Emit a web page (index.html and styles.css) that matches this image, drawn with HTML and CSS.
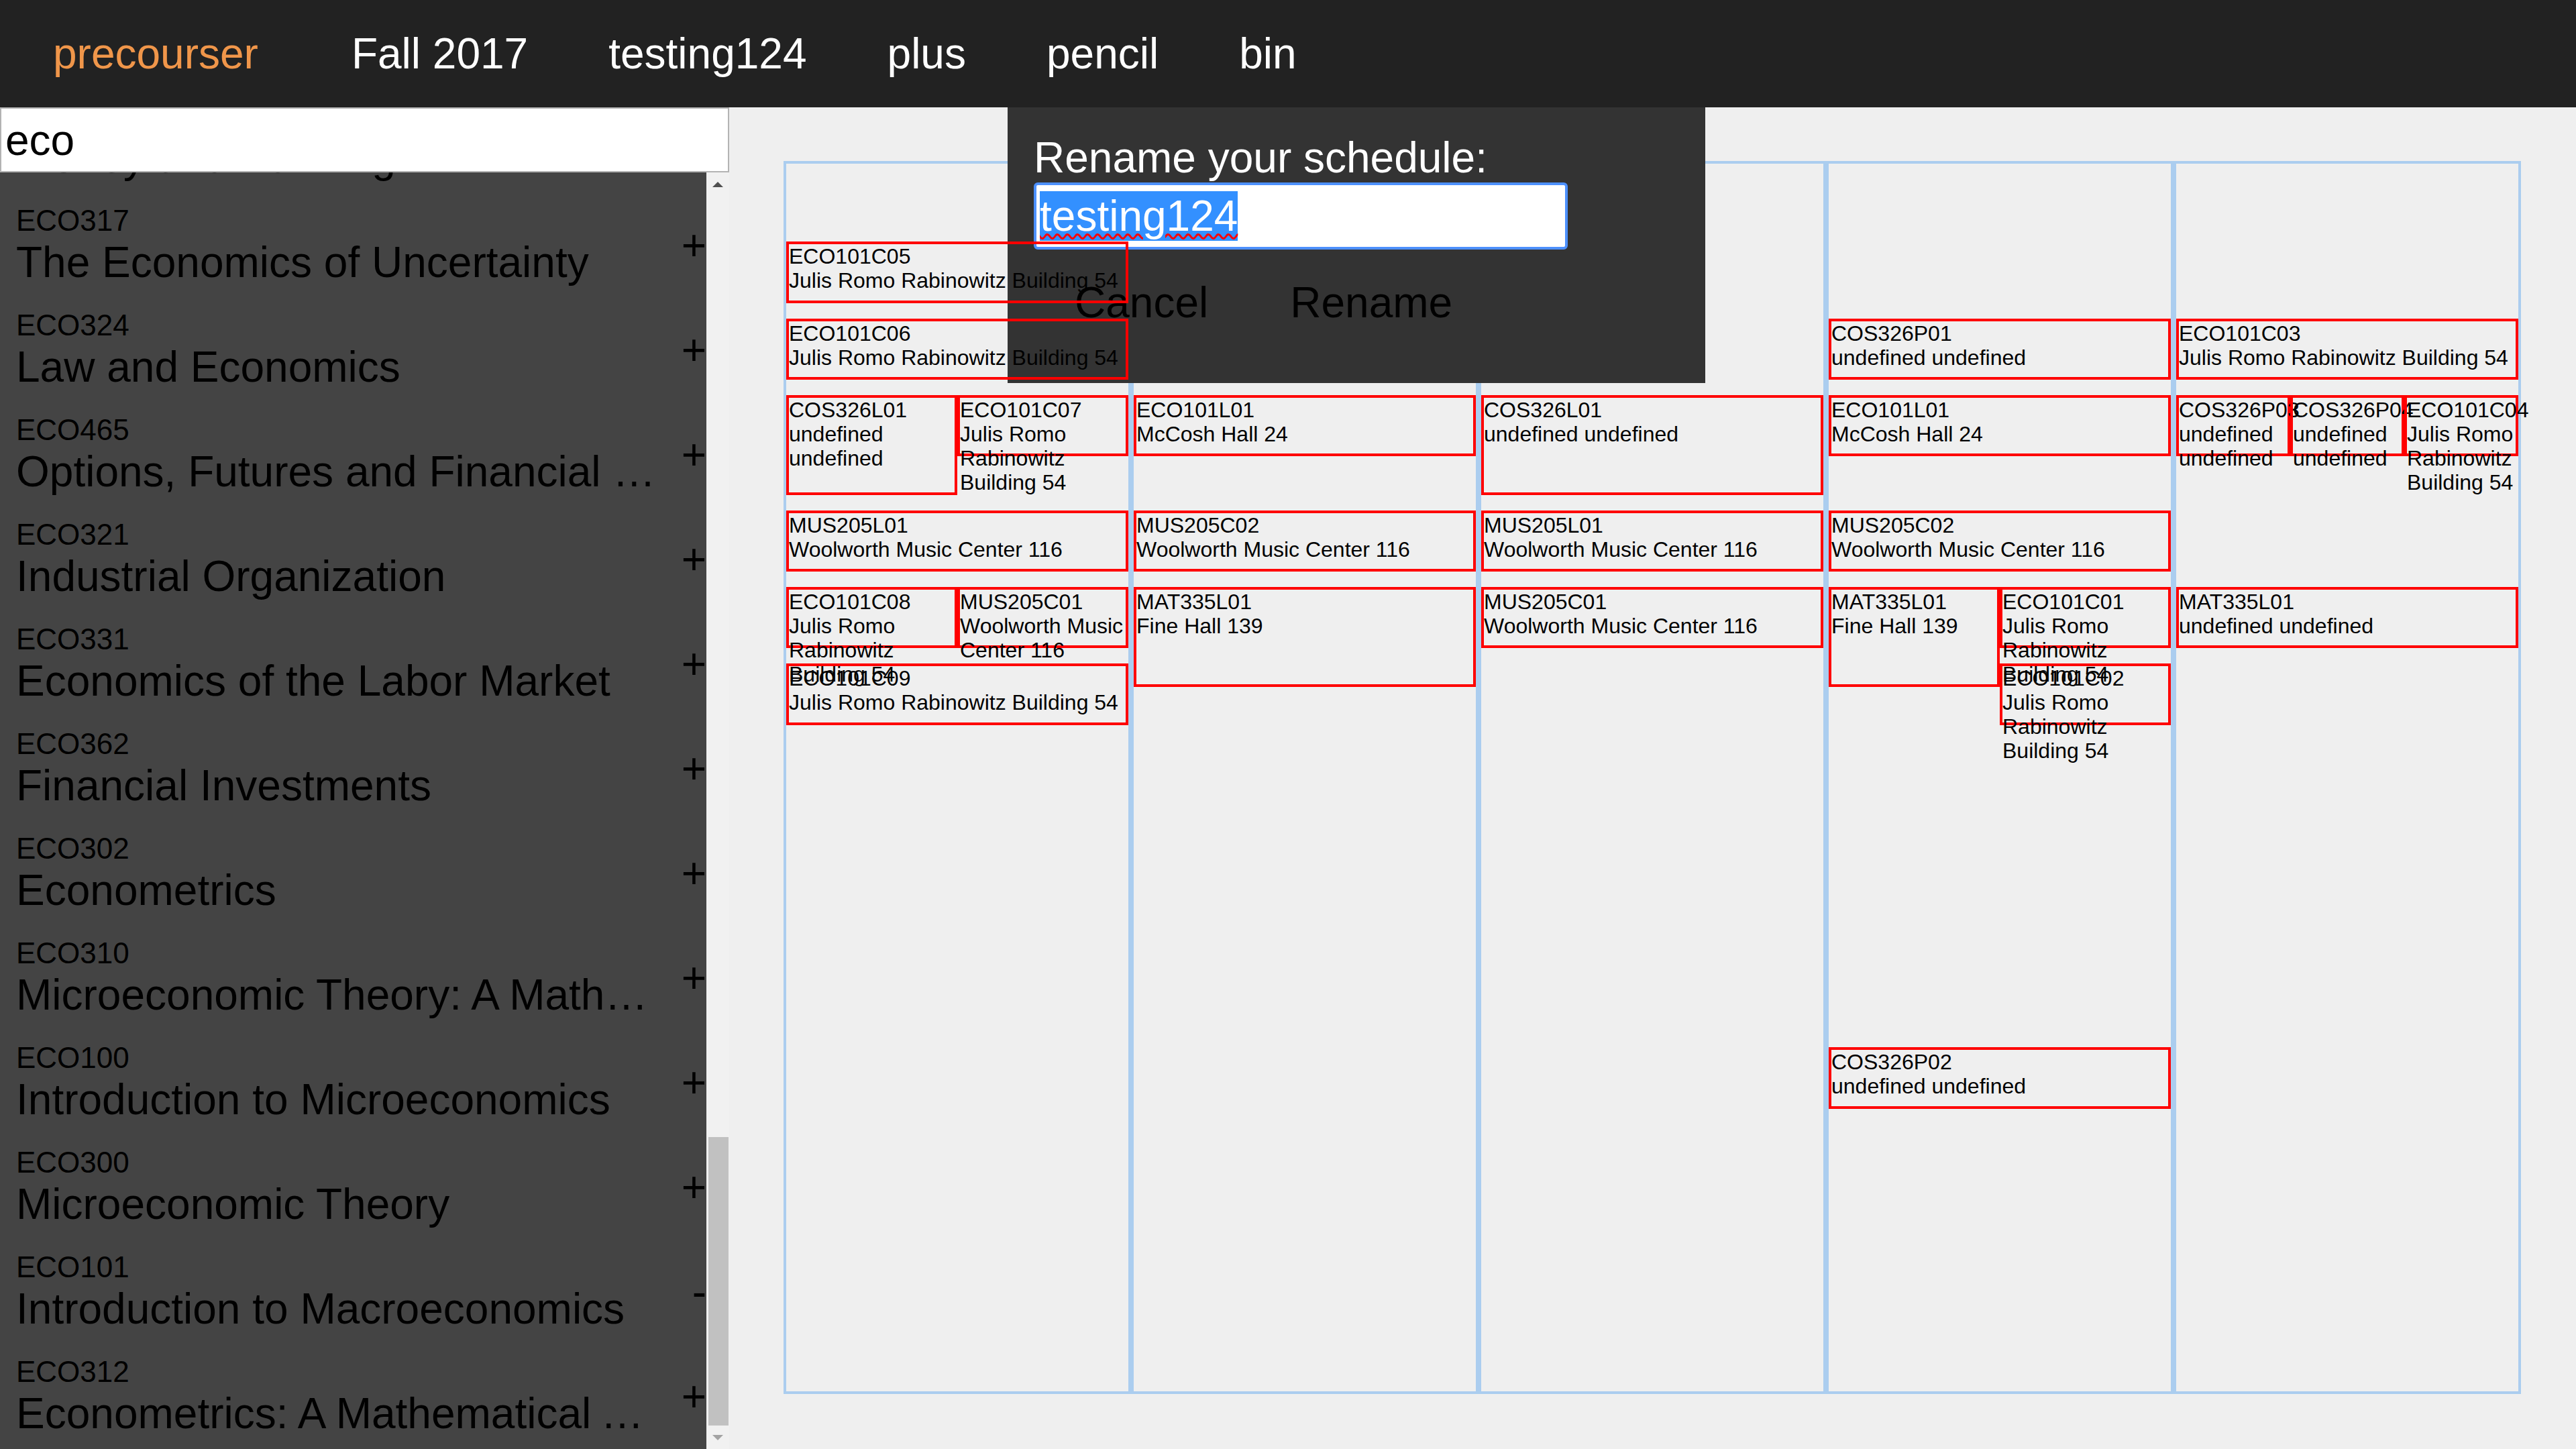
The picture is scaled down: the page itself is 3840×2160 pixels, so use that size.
FILE: index.html
```html
<!DOCTYPE html>
<html lang="en">
<head>
<meta charset="utf-8">
<title>precourser</title>
<link rel="stylesheet" href="styles.css">
</head>
<body>
<header class="topbar">
  <span class="brand">precourser</span>
  <span class="nav-item">Fall 2017</span>
  <span class="nav-item">testing124</span>
  <span class="nav-item">plus</span>
  <span class="nav-item">pencil</span>
  <span class="nav-item">bin</span>
</header>
<div class="layout">
  <aside class="sidebar">
    <input class="search" type="text" value="eco">
    <div class="results">
      <div class="course-list">
        <div class="course-scroll">
          <div class="course"><div class="course-text"><div class="code">ECO342</div><div class="title">Money and Banking</div></div><span class="toggle">+</span></div>
          <div class="course"><div class="course-text"><div class="code">ECO317</div><div class="title">The Economics of Uncertainty</div></div><span class="toggle">+</span></div>
          <div class="course"><div class="course-text"><div class="code">ECO324</div><div class="title">Law and Economics</div></div><span class="toggle">+</span></div>
          <div class="course"><div class="course-text"><div class="code">ECO465</div><div class="title">Options, Futures and Financial Derivatives</div></div><span class="toggle">+</span></div>
          <div class="course"><div class="course-text"><div class="code">ECO321</div><div class="title">Industrial Organization</div></div><span class="toggle">+</span></div>
          <div class="course"><div class="course-text"><div class="code">ECO331</div><div class="title">Economics of the Labor Market</div></div><span class="toggle">+</span></div>
          <div class="course"><div class="course-text"><div class="code">ECO362</div><div class="title">Financial Investments</div></div><span class="toggle">+</span></div>
          <div class="course"><div class="course-text"><div class="code">ECO302</div><div class="title">Econometrics</div></div><span class="toggle">+</span></div>
          <div class="course"><div class="course-text"><div class="code">ECO310</div><div class="title">Microeconomic Theory: A Mathematical Approach</div></div><span class="toggle">+</span></div>
          <div class="course"><div class="course-text"><div class="code">ECO100</div><div class="title">Introduction to Microeconomics</div></div><span class="toggle">+</span></div>
          <div class="course"><div class="course-text"><div class="code">ECO300</div><div class="title">Microeconomic Theory</div></div><span class="toggle">+</span></div>
          <div class="course"><div class="course-text"><div class="code">ECO101</div><div class="title">Introduction to Macroeconomics</div></div><span class="toggle">-</span></div>
          <div class="course"><div class="course-text"><div class="code">ECO312</div><div class="title">Econometrics: A Mathematical Approach</div></div><span class="toggle">+</span></div>
        </div>
      </div>
      <div class="scrollbar">
        <div class="sb-btn"><span class="arrow-up"></span></div>
        <div class="sb-track"><div class="sb-thumb"></div></div>
        <div class="sb-btn"><span class="arrow-down"></span></div>
      </div>
    </div>
  </aside>
  <main class="main">
    <div class="calendar">
      <div class="day">
        <div class="event" style="top:116.4px;height:91.3px;left:0;width:100%">ECO101C05<br>Julis Romo Rabinowitz Building 54</div>
        <div class="event" style="top:230.8px;height:91.3px;left:0;width:100%">ECO101C06<br>Julis Romo Rabinowitz Building 54</div>
        <div class="event" style="top:345.1px;height:148.5px;left:0;width:50%">COS326L01<br>undefined undefined</div>
        <div class="event" style="top:345.1px;height:91.3px;left:50%;width:50%">ECO101C07<br>Julis Romo Rabinowitz Building 54</div>
        <div class="event" style="top:516.7px;height:91.3px;left:0;width:100%">MUS205L01<br>Woolworth Music Center 116</div>
        <div class="event" style="top:631.1px;height:91.3px;left:0;width:50%">ECO101C08<br>Julis Romo Rabinowitz Building 54</div>
        <div class="event" style="top:631.1px;height:91.3px;left:50%;width:50%">MUS205C01<br>Woolworth Music Center 116</div>
        <div class="event" style="top:745.4px;height:91.3px;left:0;width:100%">ECO101C09<br>Julis Romo Rabinowitz Building 54</div>
      </div>
      <div class="day">
        <div class="event" style="top:345.1px;height:91.3px;left:0;width:100%">ECO101L01<br>McCosh Hall 24</div>
        <div class="event" style="top:516.7px;height:91.3px;left:0;width:100%">MUS205C02<br>Woolworth Music Center 116</div>
        <div class="event" style="top:631.1px;height:148.5px;left:0;width:100%">MAT335L01<br>Fine Hall 139</div>
      </div>
      <div class="day">
        <div class="event" style="top:345.1px;height:148.5px;left:0;width:100%">COS326L01<br>undefined undefined</div>
        <div class="event" style="top:516.7px;height:91.3px;left:0;width:100%">MUS205L01<br>Woolworth Music Center 116</div>
        <div class="event" style="top:631.1px;height:91.3px;left:0;width:100%">MUS205C01<br>Woolworth Music Center 116</div>
      </div>
      <div class="day">
        <div class="event" style="top:230.8px;height:91.3px;left:0;width:100%">COS326P01<br>undefined undefined</div>
        <div class="event" style="top:345.1px;height:91.3px;left:0;width:100%">ECO101L01<br>McCosh Hall 24</div>
        <div class="event" style="top:516.7px;height:91.3px;left:0;width:100%">MUS205C02<br>Woolworth Music Center 116</div>
        <div class="event" style="top:631.1px;height:148.5px;left:0;width:50%">MAT335L01<br>Fine Hall 139</div>
        <div class="event" style="top:631.1px;height:91.3px;left:50%;width:50%">ECO101C01<br>Julis Romo Rabinowitz Building 54</div>
        <div class="event" style="top:745.4px;height:91.3px;left:50%;width:50%">ECO101C02<br>Julis Romo Rabinowitz Building 54</div>
        <div class="event" style="top:1317.3px;height:91.3px;left:0;width:100%">COS326P02<br>undefined undefined</div>
      </div>
      <div class="day">
        <div class="event" style="top:230.8px;height:91.3px;left:0;width:100%">ECO101C03<br>Julis Romo Rabinowitz Building 54</div>
        <div class="event" style="top:345.1px;height:91.3px;left:0;width:33.333%">COS326P03<br>undefined undefined</div>
        <div class="event" style="top:345.1px;height:91.3px;left:33.333%;width:33.333%">COS326P04<br>undefined undefined</div>
        <div class="event" style="top:345.1px;height:91.3px;left:66.667%;width:33.333%">ECO101C04<br>Julis Romo Rabinowitz Building 54</div>
        <div class="event" style="top:631.1px;height:91.3px;left:0;width:100%">MAT335L01<br>undefined undefined</div>
      </div>
    </div>
  </main>
</div>
<div class="dialog">
  <div class="dialog-title">Rename your schedule:</div>
  <div class="rename-field"><span class="selected">testing124</span></div>
  <div class="dialog-actions">
    <button class="dialog-btn" type="button">Cancel</button>
    <button class="dialog-btn" type="button">Rename</button>
  </div>
</div>
</body>
</html>
```
FILE: styles.css
```css
html, body {
  margin: 0;
  padding: 0;
}

body {
  position: relative;
  width: 3840px;
  height: 2160px;
  overflow: hidden;
  background: #efefef;
  font-family: "Liberation Sans", Arial, sans-serif;
  color: #000;
}

/* ---------- top bar ---------- */
.topbar {
  height: 160px;
  box-sizing: border-box;
  background: #222222;
  display: flex;
  align-items: center;
  padding-left: 19px;
  font-size: 64px;
  line-height: normal;
}

.brand {
  color: #f0964a;
  padding: 0 60px;
  margin-right: 19px;
}

.nav-item {
  color: #ffffff;
  padding: 0 60px;
}

/* ---------- layout ---------- */
.layout {
  display: flex;
  height: 2000px;
}

/* ---------- sidebar ---------- */
.sidebar {
  width: 1087px;
  flex: none;
  display: flex;
  flex-direction: column;
  background: #444444;
}

.search {
  display: block;
  width: 100%;
  height: 97px;
  box-sizing: border-box;
  margin: 0;
  border: 2px solid #b3b3b3;
  padding: 0 6px;
  background: #ffffff;
  color: #000;
  font-family: "Liberation Sans", Arial, sans-serif;
  font-size: 64px;
  outline: none;
}

.results {
  flex: 1;
  min-height: 0;
  display: flex;
}

.course-list {
  flex: 1;
  min-width: 0;
  overflow: hidden;
}

.course-scroll {
  margin-top: -125.4px;
}

.course {
  height: 156px;
  box-sizing: border-box;
  padding: 16px 0 16px 24px;
  display: flex;
  align-items: center;
}

.course-text {
  flex: 1;
  min-width: 0;
}

.code {
  font-size: 44px;
  line-height: 50px;
}

.title {
  font-size: 64px;
  line-height: 74px;
  white-space: nowrap;
  overflow: hidden;
  text-overflow: ellipsis;
}

.toggle {
  flex: none;
  width: 58px;
  text-align: right;
  font-size: 64px;
  line-height: normal;
}

/* fake scrollbar */
.scrollbar {
  width: 34px;
  flex: none;
  background: #f1f1f1;
  display: flex;
  flex-direction: column;
}

.sb-btn {
  height: 36px;
  flex: none;
  display: flex;
  align-items: center;
  justify-content: center;
}

.arrow-up {
  width: 0;
  height: 0;
  border-left: 8px solid transparent;
  border-right: 8px solid transparent;
  border-bottom: 8px solid #505050;
}

.arrow-down {
  width: 0;
  height: 0;
  border-left: 8px solid transparent;
  border-right: 8px solid transparent;
  border-top: 8px solid #a3a3a3;
}

.sb-track {
  flex: 1;
  padding: 0 1px 0 3px;
}

.sb-thumb {
  margin-top: 1402px;
  height: 430px;
  background: #c1c1c1;
}

/* ---------- calendar ---------- */
.main {
  flex: 1;
  min-width: 0;
  box-sizing: border-box;
  padding: 80px 82px 82px 81px;
}

.calendar {
  display: grid;
  grid-template-columns: repeat(5, 1fr);
  height: 100%;
}

.day {
  position: relative;
  border: 4px solid #abcdef;
}

.event {
  position: absolute;
  z-index: 2;
  box-sizing: border-box;
  border: 4px solid #ff0000;
  font-size: 32px;
  line-height: 36px;
  color: #000;
}

/* ---------- rename dialog ---------- */
.dialog {
  position: absolute;
  left: 1502px;
  top: 160px;
  width: 1040px;
  box-sizing: border-box;
  padding: 38px 40px 43px 39px;
  background: #333333;
  z-index: 1;
}

.dialog-title {
  color: #ffffff;
  font-size: 64px;
  line-height: normal;
}

.rename-field {
  width: 796px;
  height: 100px;
  box-sizing: border-box;
  border: 4px solid #4d90fe;
  border-radius: 6px;
  background: #ffffff;
  display: flex;
  align-items: center;
  padding-left: 5px;
  font-size: 64px;
  line-height: normal;
}

.selected {
  background: #3390ff;
  color: #ffffff;
  text-decoration: underline wavy #ff0000;
  text-decoration-thickness: 3px;
  text-underline-offset: 4px;
}

.dialog-actions {
  display: flex;
  margin-top: 2px;
}

.dialog-btn {
  background: none;
  border: none;
  margin: 0;
  padding: 40px 61px;
  font-family: "Liberation Sans", Arial, sans-serif;
  font-size: 64px;
  line-height: normal;
  color: #000;
}
```
